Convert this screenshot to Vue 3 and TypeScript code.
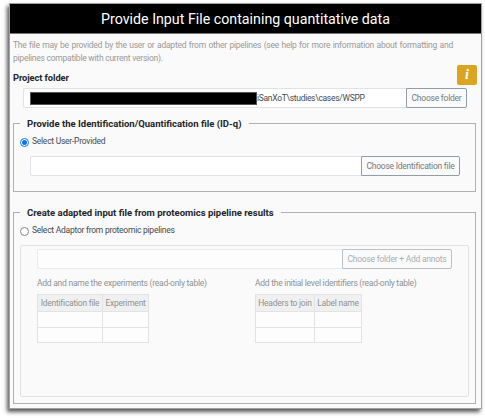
<script setup lang="ts">
import { ref } from 'vue'

interface ReadOnlyTable {
  caption: string
  columns: { title: string; width: number }[]
}

const source = ref<'user' | 'adaptor'>('user')
const projectFolder = 'iSanXoT\\studies\\cases/WSPP'
const tables: ReadOnlyTable[] = [
  {
    caption: 'Add and name the experiments (read-only table)',
    columns: [{ title: 'Identification file', width: 65 }, { title: 'Experiment', width: 46 }],
  },
  {
    caption: 'Add the initial level identifiers (read-only table)',
    columns: [{ title: 'Headers to join', width: 59 }, { title: 'Label name', width: 47 }],
  },
]
</script>

<template>
  <main class="window">
    <h1>Provide Input File containing quantitative data</h1>
    <div class="content">
      <p class="intro">The file may be provided by the user or adapted from other pipelines (see help for more information about formatting and pipelines compatible with current version).</p>
      <div class="project-head">
        <h2>Project folder</h2>
        <button class="info" aria-label="Help">i</button>
      </div>
      <div class="group project">
        <div class="field"><span class="redacted"></span>{{ projectFolder }}</div>
        <button class="choose folder">Choose folder</button>
      </div>

      <fieldset class="provided">
        <legend>Provide the Identification/Quantification file (ID-q)</legend>
        <label class="option">
          <input v-model="source" type="radio" value="user"><span class="dot"></span>
          <span>Select User-Provided</span>
        </label>
        <div class="group identification">
          <div class="field"></div>
          <button class="choose ident">Choose Identification file</button>
        </div>
      </fieldset>

      <fieldset class="adapted">
        <legend>Create adapted input file from proteomics pipeline results</legend>
        <label class="option">
          <input v-model="source" type="radio" value="adaptor"><span class="dot"></span>
          <span>Select Adaptor from proteomic pipelines</span>
        </label>
        <section class="panel">
          <div class="group">
            <div class="field"></div>
            <button class="choose annots">Choose folder + Add annots</button>
          </div>
          <div class="tables">
            <div v-for="t in tables" :key="t.caption">
              <div class="caption">{{ t.caption }}</div>
              <table>
                <thead>
                  <tr><th v-for="c in t.columns" :key="c.title" :style="{ width: c.width + 'px' }">{{ c.title }}</th></tr>
                </thead>
                <tbody>
                  <tr v-for="r in 2" :key="r"><td v-for="c in t.columns" :key="c.title"></td></tr>
                </tbody>
              </table>
            </div>
          </div>
        </section>
      </fieldset>
    </div>
  </main>
</template>

<style>
body { display: flow-root; min-height: 418px; background: #fff; }
</style>

<style scoped>
* { box-sizing: border-box; }
.window {
  width: 473px;
  height: 406px;
  margin: 3px 0 9px 9px;
  border: 1px solid #a0a0a0;
  background: #fafafa;
  box-shadow: -2px 3px 4px rgba(0, 0, 0, .65);
  font: 8.5px/13px Roboto, sans-serif;
  letter-spacing: -.25px;
  color: #454b50;
}
h1 {
  height: 30px;
  margin: 0;
  border-bottom: 1px solid #777;
  background: #000;
  color: #fff;
  font-size: 14.24px;
  font-weight: 400;
  letter-spacing: 0;
  line-height: 31px;
  text-align: center;
}
.content { padding: 5px 5px 0 3px; }
.intro {
  width: 440px;
  height: 26px;
  margin: 0;
  color: #999;
  letter-spacing: -.24px;
  text-align: justify;
}
.project-head {
  display: flex;
  justify-content: space-between;
  height: 23px;
}
h2 {
  margin: 7px 0 0;
  font-size: 9.3px;
  font-weight: 700;
  letter-spacing: -.08px;
  line-height: 12px;
  color: #222529;
}
.info {
  width: 20px;
  height: 20px;
  margin-right: -1px;
  padding: 0;
  border: 0;
  border-radius: 2px;
  background: #daa520;
  color: #fff;
  font: italic 700 14px/20px "Liberation Serif", serif;
}
.group { display: flex; height: 20px; }
.project { margin: 0 9px 0 10px; }
.field {
  display: flex;
  align-items: center;
  flex: 1;
  padding-left: 6px;
  border: 1px solid #dfe3e7;
  border-right: 0;
  border-radius: 2px 0 0 2px;
  background: #fff;
  white-space: nowrap;
  letter-spacing: -.3px;
}
.redacted {
  width: 227px;
  height: 13px;
  border: 1px solid #555;
  background: #000;
}
.choose {
  padding: 0;
  border: 1px solid #949ca3;
  border-radius: 0 2px 2px 0;
  background: #fafafa;
  color: #737a80;
  font: 8.5px/18px Roboto, sans-serif;
  letter-spacing: -.24px;
  white-space: nowrap;
}
.folder { width: 61px; }
.ident { width: 99px; }
.annots { width: 110px; }
fieldset {
  min-width: 0;
  margin: 0;
  padding: 0;
  border: 1px solid #b0b0b0;
}
legend {
  height: 13px;
  margin-left: 6px;
  padding: 0 7px;
  color: #222529;
  font-size: 9.53px;
  font-weight: 700;
  letter-spacing: 0;
}
.provided { height: 75px; margin-top: 9px; }
.adapted { height: 198px; margin-top: 14px; }
.option {
  display: flex;
  align-items: center;
  gap: 3px;
  height: 13px;
  margin: 5px 0 0 6px;
}
.option input { position: absolute; opacity: 0; }
.dot {
  width: 9px;
  height: 9px;
  margin-top: 1px;
  border: 1px solid #858585;
  border-radius: 50%;
  background: #fff;
}
.option input:checked + .dot {
  border-color: #3d92f5;
  background: #0875ee;
  box-shadow: inset 0 0 0 1px #fff;
}
.identification { margin: 8px 15px 0 16px; }
.panel {
  height: 152px;
  margin: 8px 6px 0;
  padding: 3px 16px 0 16px;
  border: 1px solid #d0d4d8;
  border-radius: 2px;
  opacity: .6;
}
.tables {
  display: grid;
  grid-template-columns: 218px 1fr;
  margin-top: 8px;
  color: #454b50;
}
.caption { height: 17px; white-space: nowrap; }
table {
  border-collapse: collapse;
  table-layout: fixed;
  width: 1px;
}
th, td {
  height: 15.5px;
  padding: 0;
  border: 1px solid #d5d5d5;
  background: #fff;
}
th {
  height: 17px;
  background: #ebebeb;
  font-weight: 400;
  white-space: nowrap;
}
</style>
